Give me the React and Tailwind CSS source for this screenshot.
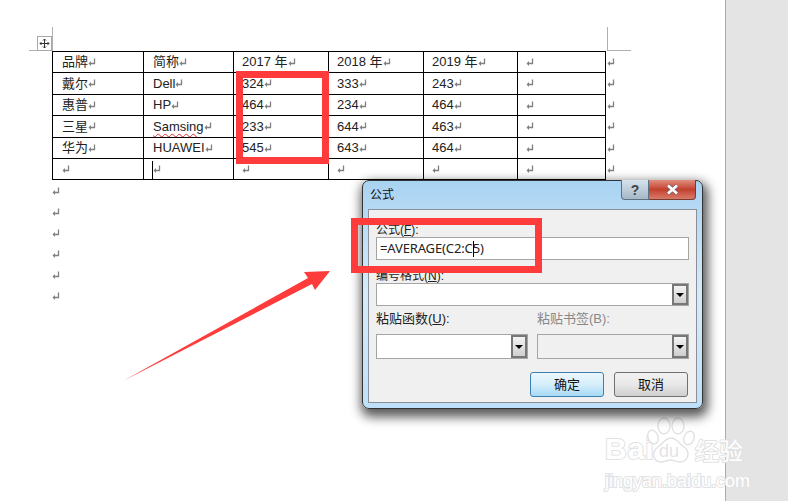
const cjk = "font-['Liberation_Sans','Noto_Sans_CJK_SC',sans-serif]";

const cols = ["w-[91px] pl-[9px]", "w-[90px] pl-[9px]", "w-[95px] pl-[8px]", "w-[95px] pl-[8px]", "w-[94px] pl-[8px]", "w-[88px] pl-[8px]"];

const rows = [
  { h: "h-[21px]", cells: ["品牌", "简称", "2017 年", "2018 年", "2019 年", ""] },
  { h: "h-[22px]", cells: ["戴尔", "Dell", "324", "333", "243", ""] },
  { h: "h-[21px]", cells: ["惠普", "HP", "464", "234", "464", ""] },
  { h: "h-[22px]", cells: ["三星", "Samsing", "233", "644", "463", ""] },
  { h: "h-[21px]", cells: ["华为", "HUAWEI", "545", "643", "464", ""] },
  { h: "h-[21px]", cells: ["", "", "", "", "", ""] },
];

function ParaMark() {
  return (
    <svg width="8" height="9" viewBox="0 0 8 9" className="block shrink-0">
      <path d="M6.5 0.5V5.5H2" fill="none" stroke="#808080" strokeWidth="1.3" />
      <path d="M0.5 5.5L3 3V8Z" fill="#808080" />
    </svg>
  );
}

function Cell({ text, className, mis }) {
  return (
    <div className={`flex items-center border-r border-black text-[13px] text-[#222] ${className}`}>
      {mis ? <span className="underline decoration-wavy decoration-[#e03030] decoration-1 underline-offset-2">{text}</span> : <span>{text}</span>}
      <ParaMark />
    </div>
  );
}

function DropArrow() {
  return (
    <div className="flex items-center justify-center w-[16px] border-2 border-[#777] bg-gradient-to-b from-[#f4f4f4] to-[#cfcfcf]">
      <div className="w-0 h-0 border-x-[4px] border-x-transparent border-t-[4px] border-t-black" />
    </div>
  );
}

function Select({ width, disabled }) {
  return (
    <div className={`flex justify-end border border-[#a5a5a5] ${width} ${disabled ? "bg-[#f0f0f0]" : "bg-white"}`}>
      <DropArrow />
    </div>
  );
}

function Dialog() {
  return (
    <div className={`absolute left-[362px] top-[180px] w-[341px] h-[229px] rounded-[7px] border border-[#333] bg-gradient-to-b from-[#a9d3f2] via-[#d6ebfa] to-[#bfe0fa] shadow-[2px_5px_11px_3px_rgba(0,0,0,0.65)] px-[5px] pb-[5px] flex flex-col ${cjk}`}>
      <div className="h-[28px] flex justify-between items-start shrink-0">
        <span className="text-[12px] text-[#111] pl-[2px] pt-[5px]">公式</span>
        <div className="flex mr-[1px] -mt-px h-[20px]">
          <div className="w-[28px] flex items-center justify-center rounded-bl-[4px] border border-t-0 border-[#5d7185] bg-gradient-to-b from-[#d5e2ec] to-[#a5b8c7] text-[14px] font-bold text-[#444] leading-none">?</div>
          <div className="w-[47px] flex items-center justify-center rounded-br-[4px] border border-l-0 border-t-0 border-[#7a3a30] bg-gradient-to-b from-[#e08d7e] via-[#c3402f] to-[#d87a68]">
            <svg width="13" height="11" viewBox="0 0 13 11">
              <path d="M2 1.5L11 9.5M11 1.5L2 9.5" stroke="#667" strokeWidth="4" />
              <path d="M2 1.5L11 9.5M11 1.5L2 9.5" stroke="#fff" strokeWidth="2.6" />
            </svg>
          </div>
        </div>
      </div>

      <div className="flex-1 border border-[#8a9098] bg-[#f0f0f0] pl-[7px] pr-[7px] flex flex-col text-[12px] text-[#222]">
        <div className="h-[27px] flex items-end pb-[1px] leading-none">公式(<span className="underline">F</span>):</div>
        <div className="relative h-[23px] border border-[#a5a5a5] bg-white flex items-center pl-[3px] text-[13px] text-[#222] font-['Noto_Sans',sans-serif] tracking-[-0.13px]">
          =AVERAGE(C2:C5)
          <div className="absolute left-[96px] top-[3px] h-[16px] w-px bg-black" />
        </div>
        <div className="h-[23px] flex items-end pb-[1px] leading-none">编号格式(<span className="underline">N</span>):</div>
        <Select width="h-[23px] w-full" />
        <div className="flex gap-[9px] mt-[4px]">
          <div className="w-[152px]">
            <div className="h-[18px] flex items-center text-[13px]">粘贴函数(<span className="underline">U</span>):</div>
            <Select width="h-[25px] w-full mt-[6px]" />
          </div>
          <div className="flex-1">
            <div className="h-[18px] flex items-center text-[13px] text-[#888]">粘贴书签(B):</div>
            <Select width="h-[25px] w-full mt-[6px]" disabled />
          </div>
        </div>
        <div className="flex justify-end gap-[10px] mt-[13px] pr-px">
          <div className="w-[74px] h-[25px] rounded-[3px] border border-[#3c7fb1] bg-gradient-to-b from-[#ecf7fd] via-[#d6eefc] to-[#a7d9f5] flex items-center justify-center text-[13px] text-[#111]">确定</div>
          <div className="w-[74px] h-[25px] rounded-[3px] border border-[#707070] bg-gradient-to-b from-[#f2f2f2] via-[#e8e8e8] to-[#cfcfcf] flex items-center justify-center text-[13px] text-[#111]">取消</div>
        </div>
      </div>
    </div>
  );
}

function Watermark() {
  const stroke = "text-white [-webkit-text-stroke:2px_#e2e2e2] [paint-order:stroke_fill]";
  return (
    <div className="absolute left-[605px] top-[416px] w-[142px] h-[76px] font-['Liberation_Sans',sans-serif]">
      <span className={`absolute left-0 top-[16px] text-[30px] font-bold leading-[34px] tracking-[1px] ${stroke}`}>Bai</span>
      <svg className="absolute left-[42px] top-0" width="50" height="50" viewBox="0 0 50 50" fill="white" stroke="#e2e2e2" strokeWidth="1.4">
        <ellipse cx="6" cy="21" rx="5" ry="7" transform="rotate(-20 6 21)" />
        <ellipse cx="17" cy="10" rx="6" ry="8" />
        <ellipse cx="31" cy="10" rx="6" ry="8" />
        <ellipse cx="42" cy="22" rx="5" ry="7" transform="rotate(20 42 22)" />
        <path d="M24 22C30 22 32 28 37 31C44 36 41 46 33 46C29 46 27 44 24 44C20 44 18 46 14 46C6 46 4 36 11 31C16 28 18 22 24 22Z" />
      </svg>
      <span className="absolute left-[54px] top-[24px] text-[18px] leading-[22px] text-[#e4e4e4]">du</span>
      <span className={`absolute left-[90px] top-[20px] text-[24px] leading-[28px] font-['Noto_Sans_CJK_SC',sans-serif] ${stroke}`}>经验</span>
      <span className={`absolute left-0 top-[53px] text-[18px] leading-[24px] whitespace-nowrap ${stroke}`}>jingyan.baidu.com</span>
    </div>
  );
}

export default function App() {
  return (
    <div className={`relative w-[788px] h-[501px] overflow-hidden bg-white flex ${cjk}`}>
      <div className="flex-1 pl-[52px] pt-[51px]">
        <div className="w-[554px] border-l border-t border-black">
          {rows.map((row, i) => (
            <div key={i} className={`relative flex border-b border-black ${row.h}`}>
              {row.cells.map((c, j) => (
                <Cell key={j} text={c} className={cols[j]} mis={c === "Samsing"} />
              ))}
              <div className="absolute left-[554px] top-[6px]"><ParaMark /></div>
            </div>
          ))}
        </div>
        <div className="flex flex-col mt-[7px]">
          {[0, 1, 2, 3, 4, 5].map((n) => (
            <div key={n} className="h-[21px] flex items-start"><ParaMark /></div>
          ))}
        </div>
      </div>
      <div className="w-[63px] bg-[#e4e4e4] border-l border-[#ababab]" />

      {/* margin marks and table handle */}
      <div className="absolute left-[52px] top-[27px] w-px h-[24px] bg-[#b0b0b0]" />
      <div className="absolute left-[29px] top-[50px] w-[23px] h-px bg-[#b0b0b0]" />
      <div className="absolute left-[607px] top-[27px] w-px h-[24px] bg-[#b0b0b0]" />
      <div className="absolute left-[607px] top-[50px] w-[24px] h-px bg-[#b0b0b0]" />
      <div className="absolute left-[37px] top-[36px] w-[15px] h-[15px] border border-[#a8a8a8] bg-white flex items-center justify-center">
        <svg width="11" height="11" viewBox="0 0 11 11" fill="none" stroke="#333">
          <path d="M5.5 1V10M1 5.5H10" />
          <path d="M4 2.5L5.5 1L7 2.5M4 8.5L5.5 10L7 8.5M2.5 4L1 5.5L2.5 7M8.5 4L10 5.5L8.5 7" />
        </svg>
      </div>
      <div className="absolute left-[152px] top-[161px] w-px h-[18px] bg-black" />

      <Watermark />
      <Dialog />

      {/* red annotations */}
      <div className="absolute left-[236px] top-[71px] w-[93px] h-[93px] border-[7px] border-[#ff3b3b]" />
      <div className="absolute left-[351px] top-[218px] w-[191px] h-[55px] border-[7px] border-[#ff3b3b]" />
      <svg className="absolute left-[120px] top-[268px]" width="215" height="116" viewBox="0 0 215 116">
        <path d="M3 113L188 10L184 4L210 3L195 22L192 16Z" fill="#ff3b3b" />
      </svg>
    </div>
  );
}
